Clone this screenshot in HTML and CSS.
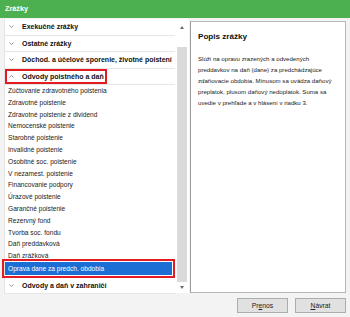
FILE: index.html
```html
<!DOCTYPE html>
<html lang="sk">
<head>
    <meta charset="UTF-8">
    <title>Zrážky</title>
    <link rel="stylesheet" href="styles.css">
</head>
<body>
    <div class="window">
        <div class="titlebar">Zrážky</div>

        <div class="content">
            <div class="tree-wrap">
                <div class="tree">
                    <div class="group-head">
                        <svg class="chev" width="5" height="3" viewBox="0 0 5 3"><path d="M0.5 0.5 L2.5 2.5 L4.5 0.5" fill="none" stroke="#8a8a8a" stroke-width="0.9"/></svg>
                        Exekučné zrážky
                    </div>
                    <div class="group-head">
                        <svg class="chev" width="5" height="3" viewBox="0 0 5 3"><path d="M0.5 0.5 L2.5 2.5 L4.5 0.5" fill="none" stroke="#8a8a8a" stroke-width="0.9"/></svg>
                        Ostatné zrážky
                    </div>
                    <div class="group-head">
                        <svg class="chev" width="5" height="3" viewBox="0 0 5 3"><path d="M0.5 0.5 L2.5 2.5 L4.5 0.5" fill="none" stroke="#8a8a8a" stroke-width="0.9"/></svg>
                        Dôchod. a účelové sporenie, životné poistení
                    </div>
                    <div class="group-head open">
                        <span class="mark">
                            <svg class="chev" width="5" height="3" viewBox="0 0 5 3"><path d="M0.5 2.5 L2.5 0.5 L4.5 2.5" fill="none" stroke="#8a8a8a" stroke-width="0.9"/></svg>
                            Odvody poistného a daň
                        </span>
                    </div>
                    <ul class="items">
                        <li>Zúčtovanie zdravotného poistenia</li>
                        <li>Zdravotné poistenie</li>
                        <li>Zdravotné poistenie z dividend</li>
                        <li>Nemocenské poistenie</li>
                        <li>Starobné poistenie</li>
                        <li>Invalidné poistenie</li>
                        <li>Osobitné soc. poistenie</li>
                        <li>V nezamest. poistenie</li>
                        <li>Financovanie podpory</li>
                        <li>Úrazové poistenie</li>
                        <li>Garančné poistenie</li>
                        <li>Rezervný fond</li>
                        <li>Tvorba soc. fondu</li>
                        <li>Daň preddavková</li>
                        <li>Daň zrážková</li>
                        <li class="selected">Oprava dane za predch. obdobia</li>
                    </ul>
                    <div class="group-head">
                        <svg class="chev" width="5" height="3" viewBox="0 0 5 3"><path d="M0.5 0.5 L2.5 2.5 L4.5 0.5" fill="none" stroke="#8a8a8a" stroke-width="0.9"/></svg>
                        Odvody a daň v zahraničí
                    </div>
                </div>
                <div class="scrollbar">
                    <span class="arrow up"></span>
                    <div class="thumb"></div>
                    <span class="arrow down"></span>
                </div>
            </div>

            <div class="desc">
                <h2>Popis zrážky</h2>
                <p>Slúži na opravu zrazených a odvedených<br>
                preddavkov na daň (dane) za predchádzajúce<br>
                zdaňovacie obdobia. Mínusom sa uvádza daňový<br>
                preplatok, plusom daňový nedoplatok. Suma sa<br>
                uvedie v prehľade a v hlásení v riadku 3.</p>
            </div>
        </div>

        <div class="buttons">
            <button class="btn">Pr<u>e</u>nos</button>
            <button class="btn"><u>N</u>ávrat</button>
        </div>
    </div>
</body>
</html>
```

FILE: styles.css
```css
* {
    margin: 0;
    padding: 0;
    box-sizing: border-box;
}
body {
    width: 350px;
    height: 317px;
    background-color: #f3f3f3;
    font-family: "Liberation Sans", Arial, sans-serif;
    color: #1e1e1e;
    overflow: hidden;
}
.window {
    display: flex;
    flex-direction: column;
    height: 317px;
}
.titlebar {
    height: 18px;
    line-height: 18px;
    padding-left: 5px;
    background-color: #4caf50;
    color: #fff;
    font-weight: bold;
    font-size: 7.3px;
}

/* levý strom + popis */
.content {
    display: flex;
    height: 275px;
    padding: 1px 4px 0 4px;
}
.tree-wrap {
    display: flex;
    width: 185px;
    background-color: #fff;
}
.tree {
    flex: 1;
    border-left: 1px solid #e4e4e4;
}
.group-head {
    display: flex;
    align-items: center;
    height: 16.5px;
    border-bottom: 1px solid #e6e6e6;
    font-weight: bold;
    font-size: 7px;
    color: #111;
}
.chev {
    margin: 0 8px 0 4px;
    flex-shrink: 0;
}
.mark {
    display: flex;
    align-items: center;
    height: 100%;
    padding-right: 3px;
    box-shadow: inset 0 0 0 2px #e31b23;
}
.items {
    list-style: none;
    padding-bottom: 2px;
    border-bottom: 1px solid #e6e6e6;
}
.items li {
    height: 11.8px;
    line-height: 11.8px;
    padding-left: 3px;
    font-size: 6.6px;
    color: #222;
    white-space: nowrap;
}
.items li.selected {
    height: 13px;
    line-height: 13px;
    margin-right: 3px;
    background-color: #1c6ed4;
    color: #fff;
    outline: 2px solid #e31b23;
    outline-offset: 1px;
}

/* posuvník */
.scrollbar {
    display: flex;
    flex-direction: column;
    align-items: center;
    width: 14px;
}
.arrow {
    display: flex;
    justify-content: center;
    align-items: center;
    width: 14px;
    height: 16px;
}
.arrow::before {
    content: "";
    border-left: 2.5px solid transparent;
    border-right: 2.5px solid transparent;
}
.arrow.up::before {
    border-bottom: 3px solid #6a6a6a;
}
.arrow.down {
    height: 11px;
}
.arrow.down::before {
    border-top: 3px solid #6a6a6a;
}
.thumb {
    flex: 1;
    width: 10px;
    margin: 12px 0 0 0;
    background-color: #dadada;
}

/* popis zrážky */
.desc {
    flex: 1;
    margin: 2px 0 0 1px;
    height: 272px;
    background-color: #fff;
    border: 1px solid #b8b8b8;
    border-left-color: #9c9c9c;
    padding: 10px 4px 0 7px;
}
.desc h2 {
    font-size: 8.1px;
    line-height: 10px;
    font-weight: bold;
    color: #111;
}
.desc p {
    margin-top: 10.5px;
    font-size: 6.1px;
    line-height: 11px;
    color: #222;
    white-space: nowrap;
}

/* tlačidlá */
.buttons {
    display: flex;
    justify-content: flex-end;
    gap: 7px;
    padding: 5px 4px 0 0;
}
.btn {
    width: 51px;
    height: 15px;
    background-color: #e1e1e1;
    border: 1px solid #adadad;
    font-family: "Liberation Sans", Arial, sans-serif;
    font-size: 6.8px;
    color: #222;
}
.btn u {
    text-decoration-thickness: 0.5px;
}
```
